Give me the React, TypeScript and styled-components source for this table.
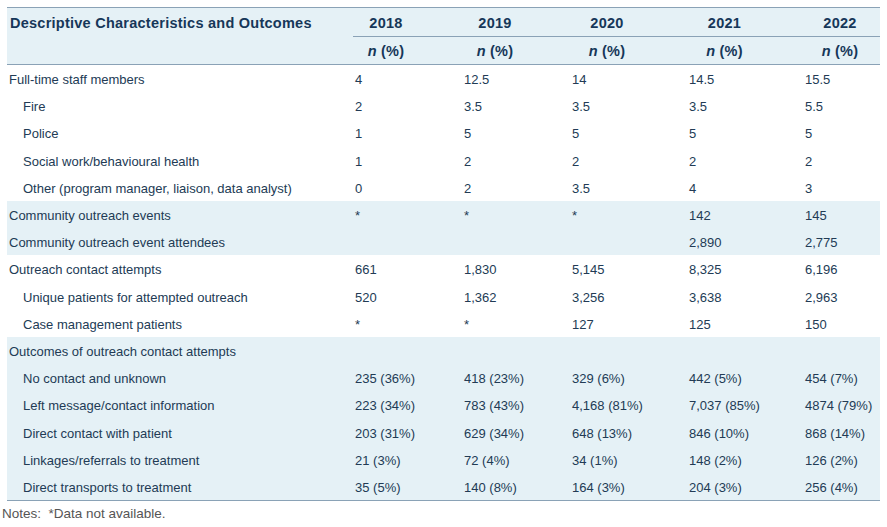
import React from "react";
import styled, { createGlobalStyle } from "styled-components";

const GlobalStyle = createGlobalStyle`
  html, body { margin: 0; padding: 0; background: #ffffff; }
  body { font-family: "Liberation Sans", Arial, sans-serif; }
`;

const COLS = "347px 109px 108px 117px 116px 76px";
const BAND = "#e5f1f6";
const LINE = "#8aa2b6";
const INK = "#223b55";
const HEAD_INK = "#163759";

const Page = styled.div`
  padding: 7px 7px 0 7px;
  width: 873px;
`;

const HeaderBlock = styled.div`
  display: grid;
  grid-template-columns: ${COLS};
  grid-template-rows: 28px 1px 27px;
  background: ${BAND};
  border-top: 1px solid ${LINE};
  border-bottom: 1px solid ${LINE};
  color: ${HEAD_INK};
  font-weight: 700;
  font-size: 14.5px;
  letter-spacing: 0.25px;
`;

const LabelHead = styled.div`
  grid-row: 1 / 2;
  grid-column: 1 / 2;
  display: flex;
  align-items: center;
  padding-left: 3px;
  padding-top: 1px;
`;

const SubRule = styled.div`
  grid-row: 2 / 3;
  grid-column: 2 / 7;
  background: ${LINE};
  margin-left: -1px;
`;

const HeadCell = styled.div<{ $w: number; $row: number }>`
  grid-row: ${(p) => p.$row} / ${(p) => p.$row + 1};
  display: flex;
  align-items: center;
  padding-top: 1px;
  span {
    display: block;
    width: ${(p) => p.$w}px;
    text-align: center;
  }
  em { font-style: italic; }
`;

const Row = styled.div<{ $band: boolean }>`
  display: grid;
  grid-template-columns: ${COLS};
  height: 27.2px;
  box-sizing: border-box;
  padding-top: 2px;
  align-items: center;
  background: ${(p) => (p.$band ? BAND : "transparent")};
  color: ${INK};
  font-size: 13px;
`;

const Label = styled.div<{ $indent: boolean }>`
  padding-left: ${(p) => (p.$indent ? 16 : 2)}px;
  white-space: nowrap;
`;

const Value = styled.div`
  white-space: nowrap;
  padding-left: 1px;
`;

const BodyBlock = styled.div`
  border-bottom: 1px solid ${LINE};
`;

const Notes = styled.div`
  margin-left: -5px;
  padding-top: 5px;
  font-size: 13.5px;
  color: #555555;
  white-space: pre;
`;

type R = { label: string; indent?: boolean; band?: boolean; v: string[] };

const rows: R[] = [
  { label: "Full-time staff members", v: ["4", "12.5", "14", "14.5", "15.5"] },
  { label: "Fire", indent: true, v: ["2", "3.5", "3.5", "3.5", "5.5"] },
  { label: "Police", indent: true, v: ["1", "5", "5", "5", "5"] },
  { label: "Social work/behavioural health", indent: true, v: ["1", "2", "2", "2", "2"] },
  { label: "Other (program manager, liaison, data analyst)", indent: true, v: ["0", "2", "3.5", "4", "3"] },
  { label: "Community outreach events", band: true, v: ["*", "*", "*", "142", "145"] },
  { label: "Community outreach event attendees", band: true, v: ["", "", "", "2,890", "2,775"] },
  { label: "Outreach contact attempts", v: ["661", "1,830", "5,145", "8,325", "6,196"] },
  { label: "Unique patients for attempted outreach", indent: true, v: ["520", "1,362", "3,256", "3,638", "2,963"] },
  { label: "Case management patients", indent: true, v: ["*", "*", "127", "125", "150"] },
  { label: "Outcomes of outreach contact attempts", band: true, v: ["", "", "", "", ""] },
  { label: "No contact and unknown", indent: true, band: true, v: ["235 (36%)", "418 (23%)", "329 (6%)", "442 (5%)", "454 (7%)"] },
  { label: "Left message/contact information", indent: true, band: true, v: ["223 (34%)", "783 (43%)", "4,168 (81%)", "7,037 (85%)", "4874 (79%)"] },
  { label: "Direct contact with patient", indent: true, band: true, v: ["203 (31%)", "629 (34%)", "648 (13%)", "846 (10%)", "868 (14%)"] },
  { label: "Linkages/referrals to treatment", indent: true, band: true, v: ["21 (3%)", "72 (4%)", "34 (1%)", "148 (2%)", "126 (2%)"] },
  { label: "Direct transports to treatment", indent: true, band: true, v: ["35 (5%)", "140 (8%)", "164 (3%)", "204 (3%)", "256 (4%)"] },
];

const years = ["2018", "2019", "2020", "2021", "2022"];
const widths = [64, 64, 72, 73, 72];

export default function App() {
  return (
    <>
      <GlobalStyle />
      <Page>
        <HeaderBlock>
          <LabelHead>Descriptive Characteristics and Outcomes</LabelHead>
          {years.map((y, i) => (
            <HeadCell key={y} $w={widths[i]} $row={1} style={{ gridColumn: i + 2 }}>
              <span>{y}</span>
            </HeadCell>
          ))}
          <SubRule />
          {years.map((y, i) => (
            <HeadCell key={y + "n"} $w={widths[i]} $row={3} style={{ gridColumn: i + 2 }}>
              <span>
                <em>n</em> (%)
              </span>
            </HeadCell>
          ))}
        </HeaderBlock>
        <BodyBlock>
          {rows.map((r) => (
            <Row key={r.label} $band={!!r.band}>
              <Label $indent={!!r.indent}>{r.label}</Label>
              {r.v.map((v, i) => (
                <Value key={i}>{v}</Value>
              ))}
            </Row>
          ))}
        </BodyBlock>
        <Notes>{"Notes:  *Data not available."}</Notes>
      </Page>
    </>
  );
}
